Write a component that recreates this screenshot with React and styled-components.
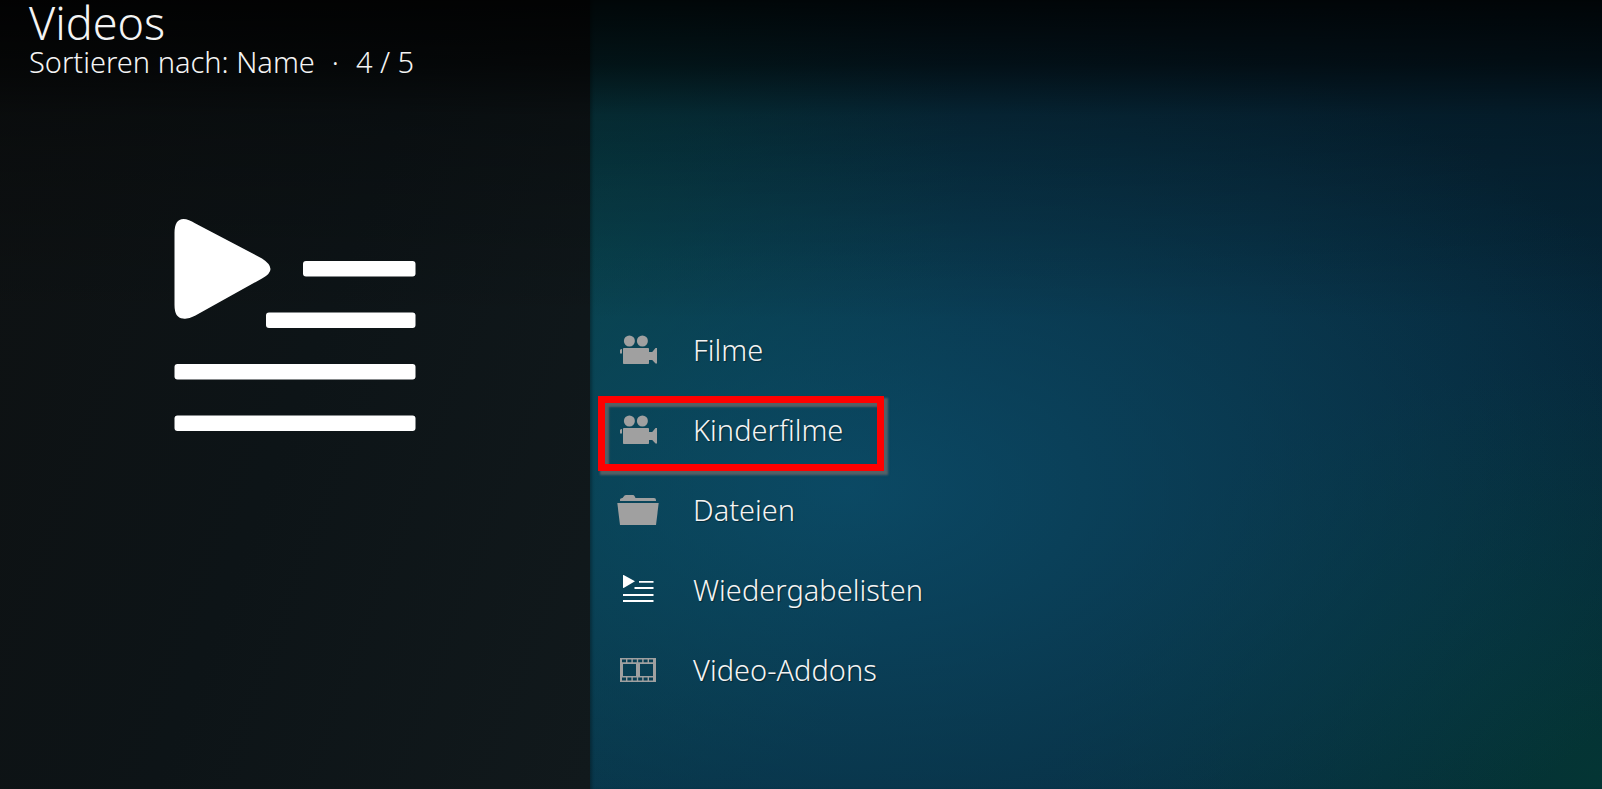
import React from "react";
import styled, { createGlobalStyle } from "styled-components";

const GlobalStyle = createGlobalStyle`
  * { box-sizing: border-box; }
  html, body, #root { height: 100%; }
  body {
    margin: 0;
    background: #083650;
    color: #f4f4f4;
    font-family: "Noto Sans", "Open Sans", sans-serif;
    font-weight: 300;
  }
`;

const Screen = styled.div`
  position: relative;
  display: flex;
  min-height: 100%;
  background:
    radial-gradient(ellipse 54% 62% at 53% 62%, rgba(12, 80, 110, 0.78), rgba(12, 74, 100, 0.46) 50%, rgba(12, 74, 100, 0) 100%),
    radial-gradient(ellipse 26% 72% at 35% 36%, rgba(6, 70, 62, 0.66), rgba(6, 66, 70, 0) 100%),
    radial-gradient(ellipse 34% 52% at 100% 98%, rgba(4, 54, 52, 0.95), rgba(4, 58, 64, 0) 100%),
    linear-gradient(100deg, #072e42 40%, #072a3e 75%, #052638 100%);
`;

const TopShade = styled.div`
  position: absolute;
  inset: 0 0 auto;
  height: 320px;
  background: linear-gradient(rgba(0, 0, 0, 0.88), rgba(0, 0, 0, 0.66) 20%, rgba(0, 0, 0, 0.3) 36%, rgba(0, 0, 0, 0.2) 55%, rgba(0, 0, 0, 0));
  pointer-events: none;
`;

const Sidebar = styled.aside`
  flex: 0 0 36.83%;
  display: flex;
  flex-direction: column;
  background: linear-gradient(110deg, #0e1112, #0d1417 50%, #11191c);
`;

const Header = styled.header`
  position: relative;
  z-index: 1;
  height: 120px;
  padding-left: 29px;
`;

const Title = styled.h1`
  margin: 0;
  font-size: 45px;
  line-height: 45px;
  font-weight: 300;
`;

const Status = styled.p`
  display: flex;
  gap: 17px;
  margin: 0;
  font-size: 29px;
  line-height: 34px;
  white-space: nowrap;
`;

const Artwork = styled.div`
  position: relative;
  z-index: 1;
  display: flex;
  justify-content: center;
  padding-top: 99px;
`;

const Main = styled.main`
  flex: 1;
  display: flex;
  flex-direction: column;
  justify-content: flex-end;
  padding-bottom: 79px;
  box-shadow: inset 3px 0 3px -1px rgba(0, 0, 0, 0.3);
`;

const Menu = styled.ul`
  margin: 0;
  padding: 0;
  list-style: none;
`;

const MenuItem = styled.li`
  position: relative;
`;

const MenuLink = styled.a`
  display: flex;
  align-items: center;
  gap: 33px;
  height: 80px;
  padding-left: 26px;
  color: ${(p) => (p.$active ? "#ffffff" : "#a0a0a0")};
  text-decoration: none;
`;

const Label = styled.span`
  color: #f4f4f4;
  font-size: 29px;
  line-height: 40px;
  text-shadow: 1px 1px 1px rgba(0, 0, 0, 0.4);
`;

const Marker = styled.div`
  position: absolute;
  top: 6px;
  left: 8px;
  width: 286px;
  height: 75px;
  border: 7px solid #ff0000;
  box-shadow: 3px 3px 2px 1px rgba(110, 105, 105, 0.75), inset 3px 3px 2px 1px rgba(110, 105, 105, 0.75);
  pointer-events: none;
`;

const IconSvg = styled.svg`
  flex: none;
  width: 44px;
  height: 44px;
  fill: currentColor;
`;

const ArtSvg = styled.svg`
  width: 242px;
  height: 213px;
  fill: #ffffff;
`;

const CameraIcon = () => (
  <IconSvg viewBox="0 0 44 44" aria-hidden="true">
    <circle cx="13.4" cy="13" r="5.5" />
    <circle cx="26.4" cy="13" r="5.5" />
    <rect x="7" y="20" width="26" height="16" rx="0.8" />
    <path d="M33 24h3.2l3.3-4H41v15.5h-1.5L36.2 32H33zM4 22.3Q4.2 21 6 21v4.5H4z" />
  </IconSvg>
);

const FolderIcon = () => (
  <IconSvg viewBox="0 0 44 44" aria-hidden="true">
    <path d="M4 13v-1.500Q4 10 6.500 10L8.500 7.500Q9 7 10 7h7q1 0 1.500 1l1 2H38q2 0 2 2v1z" />
    <path d="M1.300 15h41.400L40 37H4z" />
  </IconSvg>
);

const PlaylistIcon = () => (
  <IconSvg viewBox="0 0 44 44" aria-hidden="true">
    <path d="M7 7.300Q7 6.800 7.600 7L19 13.300 7.600 20Q7 20.200 7 19.600z" />
    <path d="M23 13h14.500v1.700H23zM18.500 19h19v2h-19zM7 26h30.500v2H7zM7 32h30.500v2H7z" />
  </IconSvg>
);

const holes = [6, 11.4, 16.8, 22.2, 27.6, 33]
  .map((x) => `M${x} 11.500h4v2.700h-4zM${x} 29.500h4v3h-4z`)
  .join("");

const FilmIcon = () => (
  <IconSvg viewBox="0 0 44 44" aria-hidden="true">
    <path fillRule="evenodd" d={`M4 10h36v24H4zM7 16h13v12H7zM24 16h13v12H24z${holes}`} />
  </IconSvg>
);

const PlaylistArtwork = () => (
  <ArtSvg viewBox="0 0 242 213" role="img" aria-label="Wiedergabelisten">
    <path d="M0.500 14Q0.500 0 9.500 0C13 0 17 1.800 21 4.200L88 39.500Q96.500 45 96.500 50Q96.500 55 88 59.500L21 96.800Q14 100.500 9 99.500Q0.500 99 0.500 86z" />
    <rect x="129" y="42" width="112.500" height="15.500" rx="3" />
    <rect x="92" y="93.500" width="149.500" height="15.500" rx="3" />
    <rect x="0.500" y="145" width="241" height="15.500" rx="3" />
    <rect x="0.500" y="196.500" width="241" height="15.500" rx="3" />
  </ArtSvg>
);

const entries = [
  { id: "filme", label: "Filme", Icon: CameraIcon },
  { id: "kinderfilme", label: "Kinderfilme", Icon: CameraIcon, marked: true },
  { id: "dateien", label: "Dateien", Icon: FolderIcon },
  { id: "wiedergabelisten", label: "Wiedergabelisten", Icon: PlaylistIcon, active: true },
  { id: "video-addons", label: "Video-Addons", Icon: FilmIcon },
];

export default function App() {
  return (
    <>
      <GlobalStyle />
      <Screen>
        <Sidebar>
          <Header>
            <Title>Videos</Title>
            <Status>
              <span>Sortieren nach: Name</span>
              <span>·</span>
              <span>4 / 5</span>
            </Status>
          </Header>
          <Artwork>
            <PlaylistArtwork />
          </Artwork>
        </Sidebar>
        <Main>
          <nav>
            <Menu>
              {entries.map(({ id, label, Icon, marked, active }) => (
                <MenuItem key={id}>
                  <MenuLink href={`#${id}`} $active={active}>
                    <Icon />
                    <Label>{label}</Label>
                  </MenuLink>
                  {marked && <Marker />}
                </MenuItem>
              ))}
            </Menu>
          </nav>
        </Main>
        <TopShade />
      </Screen>
    </>
  );
}
